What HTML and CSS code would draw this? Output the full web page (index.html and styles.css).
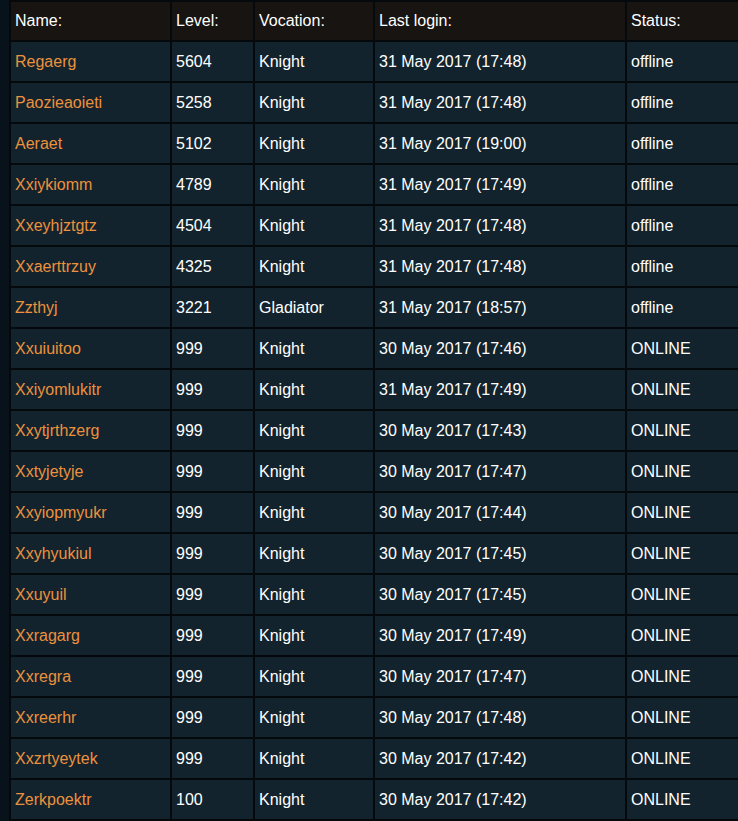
FILE: index.html
```html
<!DOCTYPE html>
<html lang="en">
<head>
  <meta charset="UTF-8" />
  <title>Highscores</title>
  <link rel="stylesheet" href="styles.css">
</head>
<body>

<table class="players">
  <colgroup>
    <col class="c-name">
    <col class="c-level">
    <col class="c-voc">
    <col class="c-login">
    <col class="c-status">
  </colgroup>
  <thead>
    <tr>
      <th>Name:</th>
      <th>Level:</th>
      <th>Vocation:</th>
      <th>Last login:</th>
      <th>Status:</th>
    </tr>
  </thead>
  <tbody>
    <tr><td class="name">Regaerg</td><td>5604</td><td>Knight</td><td>31 May 2017 (17:48)</td><td>offline</td></tr>
    <tr><td class="name">Paozieaoieti</td><td>5258</td><td>Knight</td><td>31 May 2017 (17:48)</td><td>offline</td></tr>
    <tr><td class="name">Aeraet</td><td>5102</td><td>Knight</td><td>31 May 2017 (19:00)</td><td>offline</td></tr>
    <tr><td class="name">Xxiykiomm</td><td>4789</td><td>Knight</td><td>31 May 2017 (17:49)</td><td>offline</td></tr>
    <tr><td class="name">Xxeyhjztgtz</td><td>4504</td><td>Knight</td><td>31 May 2017 (17:48)</td><td>offline</td></tr>
    <tr><td class="name">Xxaerttrzuy</td><td>4325</td><td>Knight</td><td>31 May 2017 (17:48)</td><td>offline</td></tr>
    <tr><td class="name">Zzthyj</td><td>3221</td><td>Gladiator</td><td>31 May 2017 (18:57)</td><td>offline</td></tr>
    <tr><td class="name">Xxuiuitoo</td><td>999</td><td>Knight</td><td>30 May 2017 (17:46)</td><td>ONLINE</td></tr>
    <tr><td class="name">Xxiyomlukitr</td><td>999</td><td>Knight</td><td>31 May 2017 (17:49)</td><td>ONLINE</td></tr>
    <tr><td class="name">Xxytjrthzerg</td><td>999</td><td>Knight</td><td>30 May 2017 (17:43)</td><td>ONLINE</td></tr>
    <tr><td class="name">Xxtyjetyje</td><td>999</td><td>Knight</td><td>30 May 2017 (17:47)</td><td>ONLINE</td></tr>
    <tr><td class="name">Xxyiopmyukr</td><td>999</td><td>Knight</td><td>30 May 2017 (17:44)</td><td>ONLINE</td></tr>
    <tr><td class="name">Xxyhyukiul</td><td>999</td><td>Knight</td><td>30 May 2017 (17:45)</td><td>ONLINE</td></tr>
    <tr><td class="name">Xxuyuil</td><td>999</td><td>Knight</td><td>30 May 2017 (17:45)</td><td>ONLINE</td></tr>
    <tr><td class="name">Xxragarg</td><td>999</td><td>Knight</td><td>30 May 2017 (17:49)</td><td>ONLINE</td></tr>
    <tr><td class="name">Xxregra</td><td>999</td><td>Knight</td><td>30 May 2017 (17:47)</td><td>ONLINE</td></tr>
    <tr><td class="name">Xxreerhr</td><td>999</td><td>Knight</td><td>30 May 2017 (17:48)</td><td>ONLINE</td></tr>
    <tr><td class="name">Xxzrtyeytek</td><td>999</td><td>Knight</td><td>30 May 2017 (17:42)</td><td>ONLINE</td></tr>
    <tr><td class="name">Zerkpoektr</td><td>100</td><td>Knight</td><td>30 May 2017 (17:42)</td><td>ONLINE</td></tr>
  </tbody>
</table>

</body>
</html>
```

FILE: styles.css
```css
body {
  margin: 0;
  padding: 0;
  background: #08121a;
  font-family: "Liberation Sans", Arial, sans-serif;
  font-size: 16px;
  color: #fff;
}
.players {
  margin-left: 9px;
  border-collapse: separate;
  border-spacing: 2px;
  background: #05090c;
  table-layout: fixed;
  width: 731px;
}
.c-name { width: 159px; }
.c-level { width: 81px; }
.c-voc { width: 118px; }
.c-login { width: 250px; }
.c-status { width: 111px; }
th, td {
  text-align: left;
  padding: 0 4px;
  vertical-align: middle;
  white-space: nowrap;
  overflow: hidden;
}
th {
  height: 38px;
  background: #171411;
  font-weight: normal;
  color: #fff;
}
td {
  height: 39px;
  background: #12232d;
}
td.name {
  color: #ec913d;
}
```
